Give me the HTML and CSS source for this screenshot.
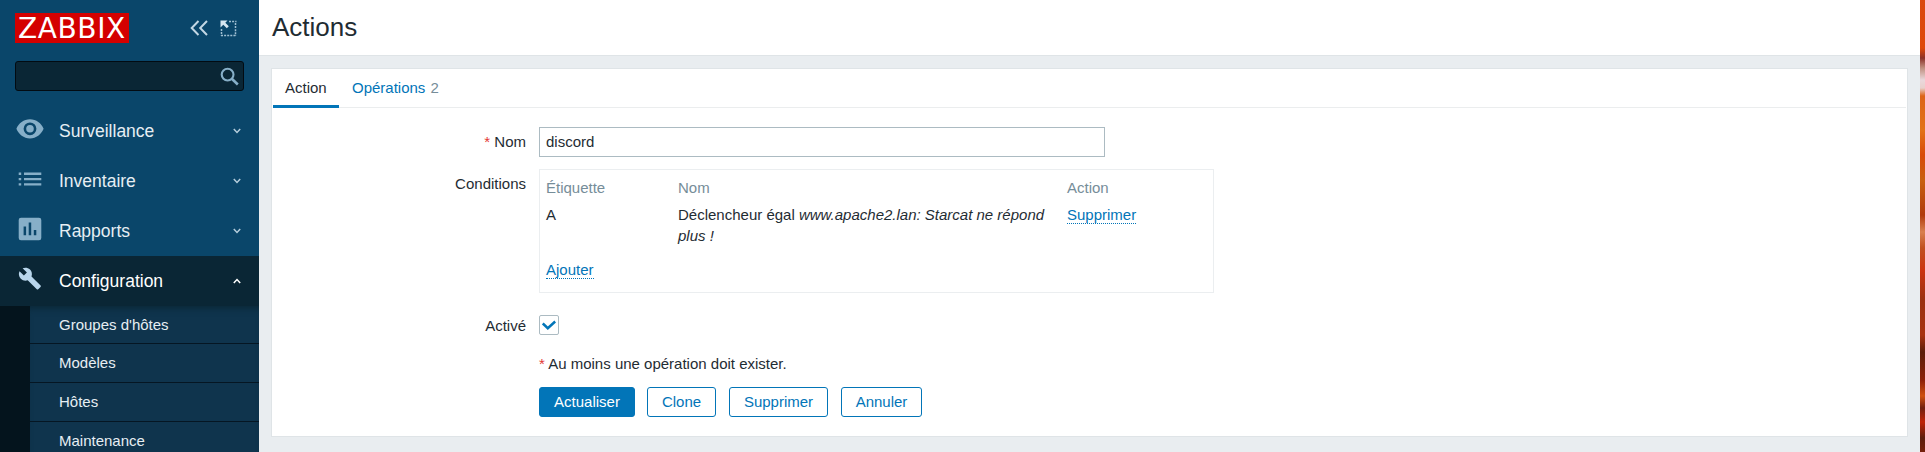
FILE: index.html
```html
<!DOCTYPE html>
<html lang="fr">
<head>
<meta charset="utf-8">
<title>Actions</title>
<link rel="stylesheet" href="styles.css">
</head>
<body>
<div class="page">
  <aside class="sidebar">
    <div class="brand">
      <div class="logo">ZABBIX</div>
      <div class="brand-tools">
        <svg width="18" height="16" viewBox="0 0 18 16"><path d="M8.500 1L1.700 8l6.800 7M17 1l-6.800 7L17 15" fill="none" stroke="#c3d7e4" stroke-width="2"/></svg>
        <svg width="17" height="17" viewBox="0 0 17 17"><path d="M9 1.500h7.500M15.500 3v13M1.500 9v7M1 15.500h15" fill="none" stroke="#9fbfd2" stroke-width="1.500" stroke-dasharray="2 1.100"/><path d="M.500 .500h7L5.300 2.700l3.500 3.500-2 2-3.500-3.500L.500 7.500z" fill="#d6e6f0"/></svg>
      </div>
    </div>
    <div class="search">
      <svg width="19" height="19" viewBox="0 0 19 19"><circle cx="7.600" cy="7.600" r="5.900" fill="none" stroke="#87afc8" stroke-width="2.100"/><path d="M11.800 11.800l6 5.700" stroke="#87afc8" stroke-width="2.600"/></svg>
    </div>
    <nav class="menu">
      <a class="menu-item">
        <svg class="menu-icon" width="28" height="22" viewBox="0 0 28 22"><path fill="#87afc8" fill-rule="evenodd" d="M14 1.200C7.800 1.200 2.600 5.200.400 10.800 2.600 16.400 7.800 20.400 14 20.400s11.400-4 13.600-9.600C25.400 5.200 20.200 1.200 14 1.200zm0 16a6.400 6.400 0 1 1 0-12.800 6.400 6.400 0 0 1 0 12.800zm0-10.200a3.800 3.800 0 1 0 0 7.600 3.800 3.800 0 0 0 0-7.600z"/></svg>
        <span>Surveillance</span>
        <svg class="chevron" width="8" height="6" viewBox="0 0 8 6"><path d="M.800 1L4 4.500 7.200 1" fill="none" stroke="#b5cddc" stroke-width="1.500"/></svg>
      </a>
      <a class="menu-item">
        <svg class="menu-icon" width="28" height="22" viewBox="0 0 28 22"><path fill="#87afc8" d="M2.700 4.500h2.500v2.400H2.700zM8 4.500h17.300v2.400H8zM2.700 10h2.500v2.300H2.700zM8 10h17.300v2.300H8zM2.700 15.200h2.500v2.400H2.700zM8 15.200h17.300v2.400H8z"/></svg>
        <span>Inventaire</span>
        <svg class="chevron" width="8" height="6" viewBox="0 0 8 6"><path d="M.800 1L4 4.500 7.200 1" fill="none" stroke="#b5cddc" stroke-width="1.500"/></svg>
      </a>
      <a class="menu-item">
        <svg class="menu-icon" width="28" height="24" viewBox="0 0 28 24"><path fill="#87afc8" fill-rule="evenodd" d="M5 .700h18a2.300 2.300 0 0 1 2.300 2.300v18a2.300 2.300 0 0 1-2.300 2.300H5a2.300 2.300 0 0 1-2.300-2.300V3A2.300 2.300 0 0 1 5 .700zM7.600 9.600v8.600h2.500V9.600zm5.100-4v12.600h2.500V5.600zm5.100 7.400v5.200h2.500V13z"/></svg>
        <span>Rapports</span>
        <svg class="chevron" width="8" height="6" viewBox="0 0 8 6"><path d="M.800 1L4 4.500 7.200 1" fill="none" stroke="#b5cddc" stroke-width="1.500"/></svg>
      </a>
      <a class="menu-item menu-item-open">
        <svg class="menu-icon" width="28" height="26" viewBox="0 0 28 26"><path fill="#b9d6ec" transform="translate(1.900 .600)" d="M22.700 19l-9.100-9.100c.9-2.300.4-5-1.500-6.900-2-2-5-2.400-7.400-1.300L9 6 6 9 1.600 4.700C.400 7.100.900 10.100 2.900 12.100c1.900 1.900 4.600 2.400 6.900 1.500l9.100 9.100c.4.4 1 .4 1.400 0l2.300-2.300c.5-.4.5-1.100.1-1.400z"/></svg>
        <span>Configuration</span>
        <svg class="chevron" width="8" height="6" viewBox="0 0 8 6"><path d="M.800 5L4 1.500 7.200 5" fill="none" stroke="#fff" stroke-width="1.500"/></svg>
      </a>
      <div class="submenu">
        <a class="submenu-item">Groupes d'hôtes</a>
        <a class="submenu-item">Modèles</a>
        <a class="submenu-item">Hôtes</a>
        <a class="submenu-item">Maintenance</a>
      </div>
    </nav>
  </aside>

  <main class="content">
    <header class="header"><h1>Actions</h1></header>
    <section class="card">
      <div class="tabs">
        <a class="tab tab-active">Action</a>
        <a class="tab">Opérations <span class="count">2</span></a>
      </div>
      <form class="form">
        <label class="label label-name"><span class="star">*</span> Nom</label>
        <input class="input" type="text" value="discord">

        <label class="label label-conditions">Conditions</label>
        <div class="conditions">
          <div class="row row-head"><span>Étiquette</span><span>Nom</span><span>Action</span></div>
          <div class="row"><span>A</span><span>Déclencheur égal <em>www.apache2.lan: Starcat ne répond plus !</em></span><span><a class="link">Supprimer</a></span></div>
          <div class="row row-add"><span><a class="link">Ajouter</a></span></div>
        </div>

        <label class="label label-enabled">Activé</label>
        <span class="checkbox"><svg width="14" height="12" viewBox="0 0 14 12"><path d="M.800 4.500L5.800 9.200 13.200 2.500" fill="none" stroke="#0275b8" stroke-width="2.500"/></svg></span>

        <div class="note"><span class="star">*</span> Au moins une opération doit exister.</div>
        <div class="buttons">
          <button type="button" class="btn btn-primary">Actualiser</button>
          <button type="button" class="btn btn-clone">Clone</button>
          <button type="button" class="btn btn-delete">Supprimer</button>
          <button type="button" class="btn btn-cancel">Annuler</button>
        </div>
      </form>
    </section>
  </main>
  <div class="wallpaper"></div>
</div>
</body>
</html>
```
FILE: styles.css
```css
* { box-sizing: border-box; }
body {
  margin: 0;
  font: 15px/21px Arial, "Liberation Sans", sans-serif;
  color: #1f2c33;
  background: #e9edf0;
}
.page { display: flex; height: 452px; overflow: hidden; }

.sidebar { width: 259px; flex: none; background: #0a466a; color: #e6eef3; }
.brand { display: flex; justify-content: space-between; padding: 13px 22px 0 15px; height: 61px; }
.logo {
  width: 114px; height: 30px; padding-left: 3px;
  background: #d40000; color: #fff;
  font: 28px/31px "DejaVu Sans", sans-serif;
  letter-spacing: .600px;
}
.brand-tools { display: flex; gap: 12px; padding-top: 7px; }
.search {
  display: flex; align-items: center; justify-content: flex-end;
  width: 229px; height: 30px; margin-left: 15px; padding-right: 4px;
  background: #0a2635; border: 1px solid #020b12; border-radius: 3px;
}
.menu { padding-top: 15px; }
.menu-item {
  display: flex; align-items: center; height: 50px; padding: 0 18px 0 16px;
  font-size: 17.500px;
}
.menu-icon { margin-right: 15px; position: relative; top: -2px; }
.chevron { margin-left: auto; }
.menu-item-open { background: #0a2635; color: #fff; }
.submenu {
  border-left: 30px solid #04141d; background: #0f344d;
  box-shadow: inset 0 7px 7px -5px #0a2635;
}
.submenu-item {
  display: block; height: 39px; padding-left: 29px;
  line-height: 37px; border-bottom: 1px solid #051623;
}
.submenu-item:first-child { height: 38px; }

.content { flex: 1; min-width: 0; }
.header { height: 56px; padding: 6px 12px 6px 13px; background: #fff; border-bottom: 1px solid #dfe4e7; }
h1 { margin: 0; font-size: 26px; font-weight: normal; line-height: 42px; }
.card { height: 369px; margin: 12px 12px 0; background: #fff; border: 1px solid #dfe4e7; }
.tabs { display: flex; height: 39px; margin: 0 1px; border-bottom: 1px solid #ebedee; }
.tab { height: 39px; padding: 0 12px; line-height: 38px; color: #0275b8; }
.tab-active { width: 66px; color: #1f2c33; border-bottom: 3px solid #0275b8; }
.tab:last-child { padding-left: 13px; }
.count { color: #768d99; margin-left: 1px; }

.form {
  display: grid; grid-template-columns: 254px 675px; column-gap: 13px;
  padding-top: 19px; align-items: start; justify-items: start;
}
.label { justify-self: end; }
.label-name { padding-top: 4px; }
.label-conditions { padding-top: 16px; }
.label-enabled { padding-top: 22px; }
.star { color: #e33734; }
.input {
  width: 566px; height: 30px; padding: 0 6px 1px;
  border: 1px solid #acbbc2; font: inherit; color: inherit; background: #fff;
}
.conditions { width: 675px; height: 124px; margin-top: 12px; padding: 7px 6px; border: 1px solid #ebeef0; }
.row { display: grid; grid-template-columns: 132px 389px 1fr; margin-bottom: 6px; }
.row > span:nth-child(2) { padding-right: 12px; }
.row-head { color: #768d99; }
.row-add { margin-top: 13px; }
.link { color: #0275b8; border-bottom: 1px dotted #0275b8; }
.checkbox {
  display: flex; align-items: center; justify-content: center;
  width: 20px; height: 20px; margin-top: 22px;
  border: 1px solid #acbbc2; border-radius: 2px;
}
.note, .buttons { grid-column: 2; }
.note { margin-top: 17px; }
.buttons { display: flex; margin-top: 13px; }
.btn {
  height: 30px; margin-right: 13px; padding: 0 0 1px; font: inherit;
  color: #0275b8; background: #fff; border: 1px solid #0275b8; border-radius: 3px;
}
.btn-primary { width: 96px; margin-right: 12px; background: #0275b8; color: #fff; }
.btn-clone { width: 69px; }
.btn-delete { width: 99px; }
.btn-cancel { width: 81px; }

.wallpaper {
  width: 5px; flex: none;
  background: linear-gradient(#d94a10 0, #df4708 48px, #8c3028 58px, #c09080 68px, #ead8dc 80px, #e8d0cc 88px, #dc6418 96px, #e27318 130px, #d84a08 155px, #c8600f 180px, #b03a0c 215px, #d98050 232px, #c05020 248px, #cc3410 270px, #9a3010 300px, #a83210 335px, #5c1d0a 352px, #8c2008 380px, #d05010 396px, #702010 408px, #c02408 422px, #5c1c0c 438px, #76200c 452px);
}
```
